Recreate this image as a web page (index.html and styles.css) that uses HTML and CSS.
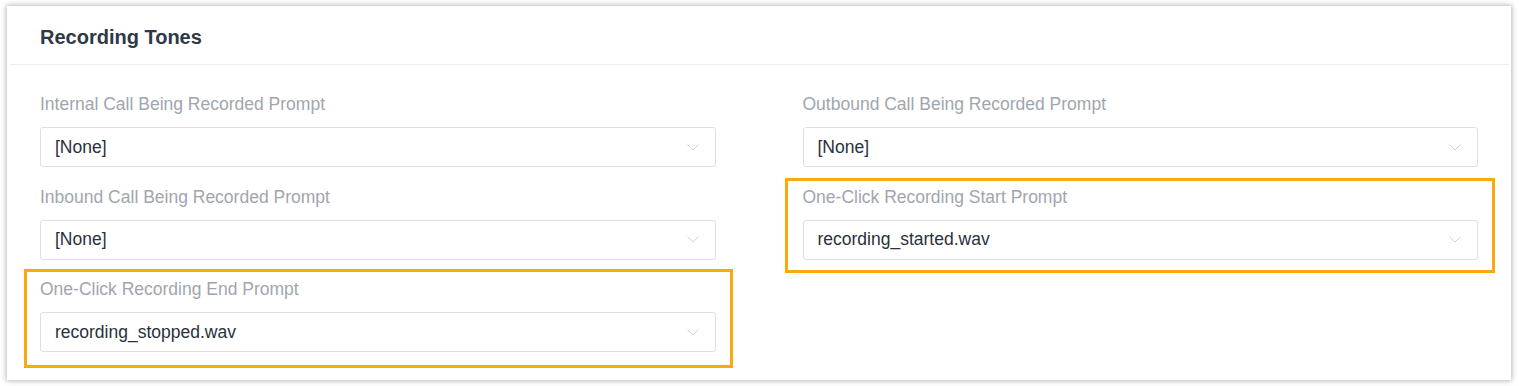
FILE: index.html
```html
<!DOCTYPE html>
<html>
<head>
<meta charset="utf-8">
<link rel="stylesheet" href="styles.css">
</head>
<body>
<div class="page">
  <section class="card">
    <header class="card-header">Recording Tones</header>
    <div class="card-body">
      <div class="field">
        <div class="field-label">Internal Call Being Recorded Prompt</div>
        <div class="select"><span class="select-value">[None]</span><svg class="chevron" width="12" height="7" viewBox="0 0 12 7"><path d="M0.5 0.5 L6 6 L11.5 0.5" fill="none" stroke="#cfd2d6" stroke-width="1"/></svg></div>
      </div>
      <div class="field">
        <div class="field-label">Outbound Call Being Recorded Prompt</div>
        <div class="select"><span class="select-value">[None]</span><svg class="chevron" width="12" height="7" viewBox="0 0 12 7"><path d="M0.5 0.5 L6 6 L11.5 0.5" fill="none" stroke="#cfd2d6" stroke-width="1"/></svg></div>
      </div>
      <div class="field">
        <div class="field-label">Inbound Call Being Recorded Prompt</div>
        <div class="select"><span class="select-value">[None]</span><svg class="chevron" width="12" height="7" viewBox="0 0 12 7"><path d="M0.5 0.5 L6 6 L11.5 0.5" fill="none" stroke="#cfd2d6" stroke-width="1"/></svg></div>
      </div>
      <div class="field highlighted hl-right">
        <div class="field-label">One-Click Recording Start Prompt</div>
        <div class="select"><span class="select-value">recording_started.wav</span><svg class="chevron" width="12" height="7" viewBox="0 0 12 7"><path d="M0.5 0.5 L6 6 L11.5 0.5" fill="none" stroke="#cfd2d6" stroke-width="1"/></svg></div>
      </div>
      <div class="field highlighted hl-left">
        <div class="field-label">One-Click Recording End Prompt</div>
        <div class="select"><span class="select-value">recording_stopped.wav</span><svg class="chevron" width="12" height="7" viewBox="0 0 12 7"><path d="M0.5 0.5 L6 6 L11.5 0.5" fill="none" stroke="#cfd2d6" stroke-width="1"/></svg></div>
      </div>
    </div>
  </section>
</div>
</body>
</html>
```

FILE: styles.css
```css
html, body {
  margin: 0;
  padding: 0;
  background: #ffffff;
}

body {
  font-family: "Liberation Sans", Arial, sans-serif;
}

.page {
  padding: 6px 8px 6px 7px;
}

.card {
  background: #ffffff;
  box-shadow: 0 0 5px 1px rgba(0, 0, 0, 0.28);
  height: 374px;
  box-sizing: border-box;
}

.card-header {
  height: 59px;
  display: flex;
  align-items: center;
  padding-left: 30px;
  padding-top: 5px;
  font-size: 20px;
  font-weight: bold;
  color: #2e3846;
  margin: 0 2px 0 3px;
  border-bottom: 1px solid #ebedf0;
  box-sizing: border-box;
}

.card-body {
  display: grid;
  grid-template-columns: 1fr 1fr;
  column-gap: 87px;
  row-gap: 17.5px;
  padding: 27px 33px 0 33px;
  align-items: start;
}

.field {
  position: relative;
  display: flex;
  flex-direction: column;
}

.field-label {
  font-size: 17.5px;
  line-height: 24px;
  color: #a0a6ae;
  margin-bottom: 11px;
}

.select {
  height: 40px;
  box-sizing: border-box;
  border: 1px solid #dcdfe3;
  border-radius: 3px;
  display: flex;
  align-items: center;
  justify-content: space-between;
  padding: 0 16px 0 14px;
}

.select-value {
  font-size: 17.5px;
  color: #2a313b;
}

.chevron {
  display: block;
}

.highlighted::after {
  content: "";
  position: absolute;
  left: -16px;
  right: -17px;
  top: -8px;
  bottom: -16px;
  border: 3px solid #f8ab0b;
  pointer-events: none;
}

.hl-right::after {
  left: -18px;
  top: -7px;
  bottom: -13px;
}
```
